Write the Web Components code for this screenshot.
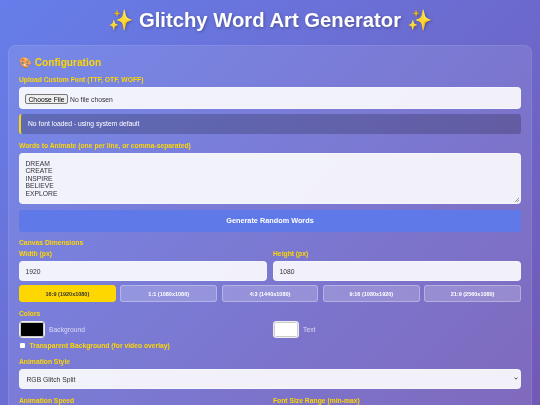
<!DOCTYPE html>
<html lang="en">
<head>
<meta charset="utf-8">
<title>Glitchy Word Art Generator</title>
<style>
  html, body { margin: 0; height: 405px; overflow: hidden; }
  body {
    background: linear-gradient(135deg, #667eea 0%, #764ba2 100%);
    background-size: 100% 760px;
    font-family: "Liberation Sans", Arial, sans-serif;
  }
</style>
</head>
<body>
<word-art-app></word-art-app>

<script>
const FONT = '"Liberation Sans", Arial, sans-serif';

// small helper so each element only writes its markup once
function shadow(el, html) {
  el.attachShadow({ mode: 'open' });
  el.shadowRoot.innerHTML = html;
  return el.shadowRoot;
}

customElements.define('gold-label', class GoldLabel extends HTMLElement {
  constructor() {
    super();
    shadow(this, `
      <style>
        :host { display: block; color: #ffd700; font: bold 6.75px/8px ${FONT}; }
      </style>
      <slot></slot>`);
  }
});

customElements.define('file-field', class FileField extends HTMLElement {
  constructor() {
    super();
    shadow(this, `
      <style>
        :host { display: block; }
        input {
          display: block; box-sizing: border-box; width: 100%; height: 22px; margin: 0;
          padding: 6px 5px; border: 1px solid rgba(255,255,255,.3); border-radius: 4px;
          background: rgba(255,255,255,.9); color: #333; font: 6.75px ${FONT};
        }
        input::file-selector-button {
          font: 6.75px ${FONT}; height: 10px; padding: 0 2.5px; margin-right: 2px;
          border: 1px solid #767676; border-radius: 2px; background: #efefef; color: #000;
        }
      </style>
      <input type="file">`);
  }
});

customElements.define('font-notice', class FontNotice extends HTMLElement {
  constructor() {
    super();
    shadow(this, `
      <style>
        :host {
          display: block; box-sizing: border-box; height: 20.5px; padding: 0 7px;
          background: rgba(0,0,0,.2); border-left: 2px solid #ffd700; border-radius: 3px;
          color: #fff; font: 6.75px/20.5px ${FONT};
        }
      </style>
      <slot></slot>`);
  }
});

customElements.define('words-box', class WordsBox extends HTMLElement {
  constructor() {
    super();
    shadow(this, `
      <style>
        :host { display: block; }
        textarea {
          display: block; box-sizing: border-box; width: 100%; height: 51px; margin: 0;
          padding: 5.5px 5.5px; border: 1px solid rgba(255,255,255,.3); border-radius: 4px; resize: none;
          background: linear-gradient(135deg, transparent 50%, #999 50%, #999 60%, transparent 60%, transparent 75%, #999 75%, #999 85%, transparent 85%) right 1px bottom 1px / 4px 4px no-repeat, rgba(255,255,255,.9);
          color: #333; font: 6.75px/7.6px ${FONT};
        }
      </style>
      <textarea>DREAM
CREATE
INSPIRE
BELIEVE
EXPLORE</textarea>`);
  }
});

customElements.define('action-button', class ActionButton extends HTMLElement {
  constructor() {
    super();
    shadow(this, `
      <style>
        :host { display: block; }
        button {
          display: block; width: 100%; height: 22px; padding: 0 0 1px; border: 0; border-radius: 3px;
          background: #5f7ae8; color: #fff; font: bold 7.3px ${FONT};
        }
      </style>
      <button><slot></slot></button>`);
  }
});

customElements.define('number-field', class NumberField extends HTMLElement {
  constructor() {
    super();
    shadow(this, `
      <style>
        :host { display: flex; flex-direction: column; gap: 3px; min-width: 0; }
        input {
          box-sizing: border-box; width: 100%; height: 20px; margin: 0; padding: 0 5.5px;
          border: 1px solid rgba(255,255,255,.3); border-radius: 4px;
          background: rgba(255,255,255,.9); color: #333; font: 6.75px ${FONT};
        }
      </style>
      <gold-label></gold-label>
      <input type="text">`);
    this.shadowRoot.querySelector('gold-label').textContent = this.getAttribute('label');
    this.shadowRoot.querySelector('input').value = this.getAttribute('value');
  }
});

customElements.define('preset-button', class PresetButton extends HTMLElement {
  constructor() {
    super();
    shadow(this, `
      <style>
        :host { display: block; min-width: 0; }
        button {
          display: block; box-sizing: border-box; width: 100%; height: 17px; padding: 0;
          border: 1px solid rgba(255,255,255,.3); border-radius: 3px;
          background: rgba(255,255,255,.2); color: #fff; font: bold 5.5px ${FONT};
        }
        :host([active]) button { background: #ffd700; border-color: #ffd700; color: #333; }
      </style>
      <button><slot></slot></button>`);
  }
});

customElements.define('color-field', class ColorField extends HTMLElement {
  constructor() {
    super();
    shadow(this, `
      <style>
        :host { display: flex; align-items: center; gap: 4px; color: rgba(255,255,255,.7); font: 6.75px ${FONT}; }
        i { display: block; box-sizing: border-box; width: 26px; height: 17px; border: 1px solid #eee; border-radius: 3px; box-shadow: inset 0 0 0 1px #ccc; background: var(--swatch); }
      </style>
      <i></i><slot></slot>`);
  }
});

customElements.define('transparent-toggle', class TransparentToggle extends HTMLElement {
  constructor() {
    super();
    shadow(this, `
      <style>
        :host { display: flex; align-items: center; gap: 4.5px; height: 8px; color: #ffd700; font: bold 6.75px ${FONT}; }
        input { width: 5px; height: 5px; margin: 0 0 0 1px; appearance: none; background: #fff; border-radius: 1px; }
      </style>
      <input type="checkbox"><slot></slot>`);
  }
});

customElements.define('style-select', class StyleSelect extends HTMLElement {
  constructor() {
    super();
    shadow(this, `
      <style>
        :host { display: block; }
        select {
          display: block; box-sizing: border-box; width: 100%; height: 20px; margin: 0; padding: 0 6.5px;
          appearance: none; border: 1px solid rgba(255,255,255,.3); border-radius: 4px;
          background-color: rgba(255,255,255,.9); color: #333; font: 6.75px ${FONT};
        }
        .wrap { position: relative; }
        svg { position: absolute; right: 3px; top: 8px; width: 4px; height: 3px; pointer-events: none; }
      </style>
      <div class="wrap">
        <select><option>RGB Glitch Split</option></select>
        <svg viewBox="0 0 8 6"><path d="M1 1.2 4 4.4 7 1.2" fill="none" stroke="#222" stroke-width="1.6"/></svg>
      </div>`);
  }
});

customElements.define('config-panel', class ConfigPanel extends HTMLElement {
  constructor() {
    super();
    shadow(this, `
      <style>
        :host {
          display: flex; flex-direction: column; box-sizing: border-box; margin: 0 8px; padding: 10.5px 10px 0;
          height: 400px; background: rgba(255,255,255,.1); border: 1px solid rgba(255,255,255,.08); border-bottom: 0;
          border-radius: 8px 8px 0 0;
        }
        h2 { margin: 0 0 7.5px; height: 12px; color: #ffd700; font: bold 10.125px/12px ${FONT}; }
        .two { display: grid; grid-template-columns: 1fr 1fr; gap: 6px; }
        .presets { display: grid; grid-template-columns: repeat(5, 1fr); gap: 4.5px; margin-top: 4px; }
        file-field { margin-top: 3px; }
        font-notice { margin-top: 4.5px; }
        .l-words { margin-top: 8px; }
        words-box { margin-top: 3px; }
        action-button { margin-top: 6px; }
        .l-canvas { margin-top: 7px; }
        .two.dims { margin-top: 3px; }
        .l-colors { margin-top: 7.5px; }
        .two.colors { margin-top: 3.5px; }
        transparent-toggle { margin-top: 3.5px; }
        .l-style { margin-top: 8px; }
        style-select { margin-top: 3.5px; }
        .l-speed { margin-top: 8px; }
      </style>
      <h2>🎨 Configuration</h2>
      <gold-label>Upload Custom Font (TTF, OTF, WOFF)</gold-label>
      <file-field></file-field>
      <font-notice>No font loaded - using system default</font-notice>
      <gold-label class="l-words">Words to Animate (one per line, or comma-separated)</gold-label>
      <words-box></words-box>
      <action-button>Generate Random Words</action-button>
      <gold-label class="l-canvas">Canvas Dimensions</gold-label>
      <div class="two dims">
        <number-field label="Width (px)" value="1920"></number-field>
        <number-field label="Height (px)" value="1080"></number-field>
      </div>
      <div class="presets">
        <preset-button active>16:9 (1920x1080)</preset-button>
        <preset-button>1:1 (1080x1080)</preset-button>
        <preset-button>4:3 (1440x1080)</preset-button>
        <preset-button>9:16 (1080x1920)</preset-button>
        <preset-button>21:9 (2560x1080)</preset-button>
      </div>
      <gold-label class="l-colors">Colors</gold-label>
      <div class="two colors">
        <color-field style="--swatch:#000">Background</color-field>
        <color-field style="--swatch:#fff">Text</color-field>
      </div>
      <transparent-toggle>Transparent Background (for video overlay)</transparent-toggle>
      <gold-label class="l-style">Animation Style</gold-label>
      <style-select></style-select>
      <div class="two l-speed">
        <gold-label>Animation Speed</gold-label>
        <gold-label>Font Size Range (min-max)</gold-label>
      </div>`);
  }
});

customElements.define('word-art-app', class WordArtApp extends HTMLElement {
  constructor() {
    super();
    shadow(this, `
      <style>
        :host { display: block; filter: blur(.35px); }
        h1 {
          margin: 0; height: 45px; color: #fff; text-align: center;
          font: bold 20.25px/41px ${FONT}; text-shadow: 1px 1px 3px rgba(0,0,0,.3);
        }
      </style>
      <h1>✨ Glitchy Word Art Generator ✨</h1>
      <config-panel></config-panel>`);
  }
});
</script>
</body>
</html>
